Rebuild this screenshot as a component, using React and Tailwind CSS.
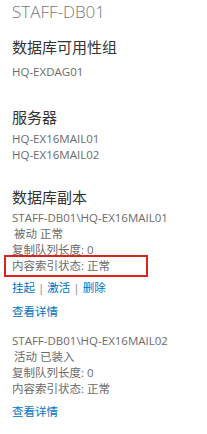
import React from "react";

const font = {
  fontFamily: '"Open Sans", "Noto Sans CJK SC", sans-serif',
};

const Replica = ({ name, status, queue, index, links, highlight }) => (
  <div className="text-[11.5px] leading-[16px] text-[#6b6b6b]">
    <div>{name}</div>
    <div className="pl-[2px]">{status}</div>
    <div>复制队列长度: {queue}</div>
    <div className="relative">
      内容索引状态: {index}
      {highlight && (
        <div className="absolute left-[-8px] top-[-3px] w-[144px] h-[22px] border-2 border-[#d9261c]" />
      )}
    </div>
    {links && (
      <div className="mt-[6px] text-[#0072c6]">
        挂起 <span className="text-[#888]">|</span> 激活{" "}
        <span className="text-[#888]">|</span> 删除
      </div>
    )}
    <div className={`${links ? "mt-[8px]" : "mt-[7px]"} text-[#0072c6]`}>查看详情</div>
  </div>
);

export default function App() {
  return (
    <div className="w-[207px] h-[434px] bg-white overflow-hidden pl-3" style={font}>
      <div className="pt-[1px] text-[17px] leading-[22px] font-light text-[#777]">
        STAFF-DB01
      </div>
      <div className="mt-[14px] text-[15px] leading-[20px] text-[#333]">数据库可用性组</div>
      <div className="mt-[7px] text-[11.5px] leading-[16px] text-[#6b6b6b]">HQ-EXDAG01</div>

      <div className="mt-[27px] text-[15px] leading-[20px] text-[#333]">服务器</div>
      <div className="mt-[4px] text-[11.5px] leading-[16px] text-[#6b6b6b]">
        <div>HQ-EX16MAIL01</div>
        <div>HQ-EX16MAIL02</div>
      </div>

      <div className="mt-[24px] text-[15px] leading-[20px] text-[#333]">数据库副本</div>
      <div className="mt-[3px]">
        <Replica
          name="STAFF-DB01\HQ-EX16MAIL01"
          status="被动 正常"
          queue="0"
          index="正常"
          links
          highlight
        />
      </div>
      <div className="mt-[13px]">
        <Replica
          name="STAFF-DB01\HQ-EX16MAIL02"
          status="活动 已装入"
          queue="0"
          index="正常"
        />
      </div>
    </div>
  );
}
